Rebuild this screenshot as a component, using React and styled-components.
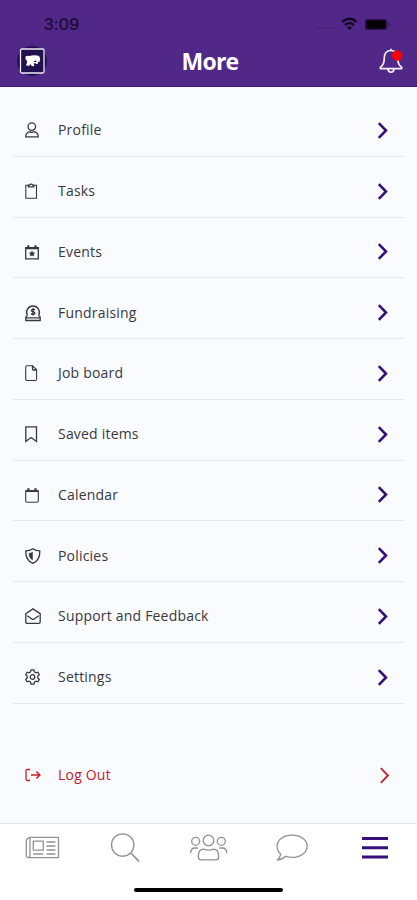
import React from 'react';
import styled, { createGlobalStyle } from 'styled-components';

const COLORS = {
  header: '#512888',
  headerEdge: '#3c1a78',
  accent: '#35107a',
  page: '#f9fbff',
  line: '#e6e8ee',
  text: '#38393d',
  danger: '#c3212c',
  navIcon: '#929292',
};

const ICONS = {
  profile: (
    <>
      <circle cx="6.8" cy="4.6" r="3.8" />
      <path d="M4.4 9.6C2.2 10.4.8 12 .7 14.9h12.6c-.1-2.900-1.500-4.500-3.700-5.300M4.400 9.600c1.300.8 3.700.8 5.200 0" />
    </>
  ),
  tasks: (
    <>
      <path d="M3.500 2.300H.8v13h10.700v-13H8.800" strokeWidth="1.1" />
      <path d="M3.400 3.900V2.100h1.200a1.600 1.600 0 0 1 3 0h1.200v1.800z" />
    </>
  ),
  events: (
    <>
      <path d="M.7 3.600h12.600v11.200H.7z" />
      <path d="M.7 4.200h12.600M3.300 1.200v2.500M10.500 1.200v2.500" strokeWidth="2.200" />
      <path
        d="m7 7.200.8 1.500 1.700.3-1.200 1.200.3 1.700L7 11.100l-1.600.8.3-1.700L4.500 9l1.700-.3z"
        fill="currentColor"
        strokeWidth="0.8"
      />
    </>
  ),
  fundraising: (
    <>
      <path d="M2.400 10.500A6.400 6.400 0 1 1 13.600 10.500M2.400 10.400.8 12v3.500h14.400V12l-1.600-1.600M.8 12.800h14.400" />
      <path d="M9.800 5c-1-1.300-3.600-.8-3.400.6.2 1.500 3.500.8 3.500 2.600 0 1.500-2.800 1.700-3.800.3M8 3v7.500" />
    </>
  ),
  job: (
    <>
      <path d="M2.100.8h5.500l4 4v9.300q0 1.400-1.400 1.400H2.100q-1.400 0-1.400-1.400V2.200Q.7.8 2.100.8z" strokeWidth="1.1" />
      <path d="M7.500.8v2.900Q7.500 5 8.800 5h2.800" />
    </>
  ),
  saved: <path d="M.8.8h10.700v14.700l-5.400-4-5.300 4z" />,
  calendar: (
    <>
      <path d="M.7 4h12.600v9.800q0 1.500-1.500 1.500H2.200Q.7 15.300.7 13.800z" strokeWidth="1.1" />
      <path d="M.7 4h12.600M3.400 1.200v2.400M10.500 1.200v2.400" strokeWidth="2.200" />
    </>
  ),
  policies: (
    <>
      <path d="M7.800.7C5.800 2.100 3.400 2.800.8 2.900c-.2 5.900 1.800 10.300 7 12.500 5.200-2.200 7.200-6.600 7-12.500C12.200 2.800 9.800 2.100 7.800.7z" />
      <path d="M7.500 4.200Q6 5.200 4 5.400c0 2.900 1 5.100 3.500 6.500z" fill="currentColor" strokeWidth="0.5" />
    </>
  ),
  support: (
    <>
      <path d="M.8 5.700 8 .9l7.200 4.800v8.200q0 1.400-1.400 1.400H2.200Q.8 15.300.8 13.900z" />
      <path d="m2.300 7.800 4.800 3.400q.9.500 1.800 0l4.800-3.400" />
    </>
  ),
  settings: (
    <>
      <path d="M6.100.9h2.800l.5 2 1.500.9 2-.6 1.400 2.400-1.500 1.500v1.800l1.500 1.500-1.400 2.400-2-.6-1.500.9-.5 2H6.100l-.5-2-1.500-.9-2 .6L.7 10.400l1.500-1.500V7.100L.7 5.600l1.400-2.400 2 .6 1.500-.9z" />
      <circle cx="7.500" cy="8" r="2.300" />
    </>
  ),
  logout: (
    <>
      <path d="M5.200 2.500H2.400Q1 2.500 1 3.900v8.200q0 1.400 1.400 1.400h2.800" />
      <path d="M6 8h8.500M11.300 4.500 14.900 8l-3.600 3.500" strokeWidth="1.5" />
    </>
  ),
};

const MENU = [
  { label: 'Profile', icon: 'profile' },
  { label: 'Tasks', icon: 'tasks' },
  { label: 'Events', icon: 'events' },
  { label: 'Fundraising', icon: 'fundraising' },
  { label: 'Job board', icon: 'job' },
  { label: 'Saved items', icon: 'saved' },
  { label: 'Calendar', icon: 'calendar' },
  { label: 'Policies', icon: 'policies' },
  { label: 'Support and Feedback', icon: 'support' },
  { label: 'Settings', icon: 'settings' },
];

const NAV = [
  {
    name: 'News',
    art: (
      <>
        <path d="M8 9.300h28.500v20.400H7.300q-3 0-3-3V13q0-2.400 3.700-3.700zM8 9.300v18q0 2.400-1.500 2.400" />
        <path d="M11.300 13.200h10v9h-10zM24.500 14h9M24.500 18h9M24.500 22h9M11.300 26h10M24.500 26h9" />
      </>
    ),
  },
  {
    name: 'Search',
    art: (
      <>
        <circle cx="17.700" cy="17" r="11.200" />
        <path d="m25.800 25 8.200 8.300" strokeWidth="1.700" />
      </>
    ),
  },
  {
    name: 'People',
    art: (
      <>
        <circle cx="20.500" cy="12.500" r="5.300" />
        <circle cx="7.700" cy="13.300" r="4" />
        <circle cx="33.300" cy="13.300" r="4" />
        <path d="M15.500 21.200q5 1.800 10 0c3.500 0 5.200 2.800 5.200 7.300 0 2-.9 3.300-2.700 3.300H13c-1.800 0-2.700-1.300-2.700-3.300 0-4.500 1.700-7.300 5.200-7.300z" />
        <path d="M2.700 25.200c0-3.500 1.500-5.200 4.400-5.200h3M38.700 25.200c0-3.500-1.500-5.200-4.400-5.200h-3" />
      </>
    ),
  },
  {
    name: 'Messages',
    art: (
      <path d="M8.800 26.200c-2.300-2.300-3.700-4.900-3.700-8 0-6.300 6.600-11 15-11s15 4.700 15 11-6.600 11.200-15 11.200c-2.300 0-4.400-.4-6.300-1.100-2.700 2.600-5 3.500-8.500 3.700 1.900-1.700 3-3.500 3.500-5.800z" />
    ),
  },
  {
    name: 'More',
    active: true,
    art: <path d="M7 10.500h26M7 19.700h26M7 28.900h26" strokeWidth="3" />,
  },
];

const MenuRow = ({ label, icon }) => (
  <Row>
    <RowIcon viewBox="0 0 16 16">{ICONS[icon]}</RowIcon>
    <Label>{label}</Label>
    <Chevron viewBox="0 0 12 20">
      <path d="m2 2 7.800 8L2 18" />
    </Chevron>
  </Row>
);

const App = () => (
  <Screen>
    <GlobalStyle />
    <Header>
      <StatusBar>
        <Time>3:09</Time>
        <StatusIcons viewBox="0 0 78 16">
          <path d="M2 12h19" stroke="#42216d" strokeWidth="1" strokeDasharray="4 1" />
          <path d="M28.300 5.800q7.200-6 14.400 0M31 9q4.500-3.800 9 0" fill="none" stroke="#100720" strokeWidth="2.300" />
          <path d="m35.500 14-2.500-2.600q2.500-2 5 0z" fill="#100720" />
          <rect x="51" y="3" width="22" height="11" rx="2.500" fill="#28104b" />
          <rect x="52.500" y="4.500" width="19" height="8" rx="1" fill="#030104" />
          <path d="M74.300 6.300q2.500 2.200 0 4.600z" fill="#28104b" />
        </StatusIcons>
      </StatusBar>
      <TitleBar>
        <Logo viewBox="0 0 32 32">
          <circle cx="16" cy="16" r="15" fill="#211052" />
          <rect x="4.500" y="4" width="23.500" height="24" rx="1.500" fill="#21114f" stroke="#efeaf7" strokeWidth="1.300" />
          <path
            d="M9.500 11.500q2-1.200 4-.6 4-1.200 7.500-.4l2 .6 1.200 2.300-.6 3.400-1.600.3-.3 1.800-1.500.2-1.200-1.200-1.300.8.600 2.300-2.300.3-1.600-2.200-1.400 2-3-.9 1.300-3.700-1.800-2.400z"
            fill="#fff"
          />
          <path d="m17.500 16.500 2.200-1 1.300.6-1.800 1.100z" fill="#211052" />
        </Logo>
        <Title>More</Title>
        <Bell viewBox="0 0 26 28">
          <path d="M13 3.500c-5 0-6.800 3.300-6.800 8.500 0 4.200-1 6.300-3.800 8.200v1.500h21.200v-1.500c-2.800-1.900-3.800-4-3.800-8.200 0-5.200-1.800-8.500-6.800-8.500zM13 3.500V1.800M10 22c.3 4.300 5.700 4.300 6 0" />
          <circle cx="19.300" cy="8.500" r="5.200" />
        </Bell>
      </TitleBar>
    </Header>

    <Menu>
      {MENU.map(item => (
        <MenuRow key={item.label} {...item} />
      ))}
      <LogOut>
        <RowIcon viewBox="0 0 16 16">{ICONS.logout}</RowIcon>
        <Label>Log Out</Label>
        <Chevron viewBox="0 0 12 20" $thin>
          <path d="m2 2 7.800 8L2 18" />
        </Chevron>
      </LogOut>
    </Menu>

    <Footer>
      <Tabs>
        {NAV.map(({ name, active, art }) => (
          <Tab key={name} aria-label={name} $active={active}>
            <TabIcon viewBox="0 0 40 40">{art}</TabIcon>
          </Tab>
        ))}
      </Tabs>
      <HomeIndicator />
    </Footer>
  </Screen>
);

const GlobalStyle = createGlobalStyle`
  *, *::before, *::after {
    box-sizing: border-box;
  }

  body {
    margin: 0;
  }
`;

const Screen = styled.div`
  display: flex;
  flex-direction: column;
  width: 417px;
  height: 900px;
  overflow: hidden;
  background: ${COLORS.page};
  font-family: 'Open Sans', 'Noto Sans', sans-serif;
`;

const Header = styled.header`
  flex: none;
  height: 87px;
  background: ${COLORS.header};
  border-bottom: 1px solid ${COLORS.headerEdge};
`;

const StatusBar = styled.div`
  display: flex;
  justify-content: space-between;
  align-items: center;
  height: 32px;
  padding: 16px 25px 0 43.5px;
`;

const Time = styled.span`
  font-family: Inter, sans-serif;
  font-size: 16.5px;
  font-weight: 500;
  line-height: 16px;
  letter-spacing: -0.2px;
  color: #1d0b37;
`;

const StatusIcons = styled.svg`
  width: 78px;
  height: 16px;
`;

const TitleBar = styled.div`
  display: grid;
  grid-template-columns: 32px 1fr 32px;
  align-items: center;
  height: 58px;
  padding: 0 13px 0 16px;
`;

const Logo = styled.svg`
  width: 32px;
  height: 32px;
`;

const Title = styled.h1`
  margin: 0;
  text-align: center;
  font-size: 23px;
  font-weight: 700;
  line-height: 30px;
  letter-spacing: -0.8px;
  color: #fff;
`;

const Bell = styled.svg`
  justify-self: end;
  width: 26px;
  height: 28px;
  fill: none;
  stroke: #f4f0fa;
  stroke-width: 1.7;
  stroke-linejoin: round;

  circle {
    fill: #fb0007;
    stroke: none;
  }
`;

const Menu = styled.main`
  flex: 1;
  padding: 9px 13px 0;
`;

const Row = styled.div`
  display: grid;
  grid-template-columns: 33px 1fr 11px;
  align-items: center;
  height: 60.75px;
  padding: 9px 16px 0 12px;
  border-bottom: 1px solid ${COLORS.line};
  color: ${COLORS.text};
`;

const LogOut = styled(Row)`
  height: 56px;
  margin-top: 39px;
  padding-right: 14px;
  border-bottom: none;
  color: ${COLORS.danger};
`;

const RowIcon = styled.svg`
  width: 16px;
  height: 16px;
  overflow: visible;
  fill: none;
  stroke: currentColor;
  stroke-width: 1.3;
`;

const Label = styled.span`
  font-size: 14px;
  line-height: 20px;
  letter-spacing: 0.2px;
`;

const Chevron = styled.svg`
  width: 11px;
  height: 19px;
  fill: none;
  stroke: ${p => (p.$thin ? COLORS.danger : COLORS.accent)};
  stroke-width: ${p => (p.$thin ? 2 : 2.8)};
`;

const Footer = styled.footer`
  flex: none;
  height: 77px;
  border-top: 1px solid #e4e5ea;
  background: #fff;
`;

const Tabs = styled.nav`
  display: grid;
  grid-template-columns: repeat(5, 1fr);
  height: 64px;
  padding-top: 4px;
`;

const Tab = styled.a`
  display: flex;
  justify-content: center;
  color: ${p => (p.$active ? COLORS.accent : COLORS.navIcon)};
`;

const TabIcon = styled.svg`
  width: 40px;
  height: 40px;
  fill: none;
  stroke: currentColor;
  stroke-width: 1.3;
  stroke-linejoin: round;
`;

const HomeIndicator = styled.div`
  width: 149px;
  height: 4px;
  margin: 0 auto;
  border-radius: 2px;
  background: #000;
`;

export default App;
